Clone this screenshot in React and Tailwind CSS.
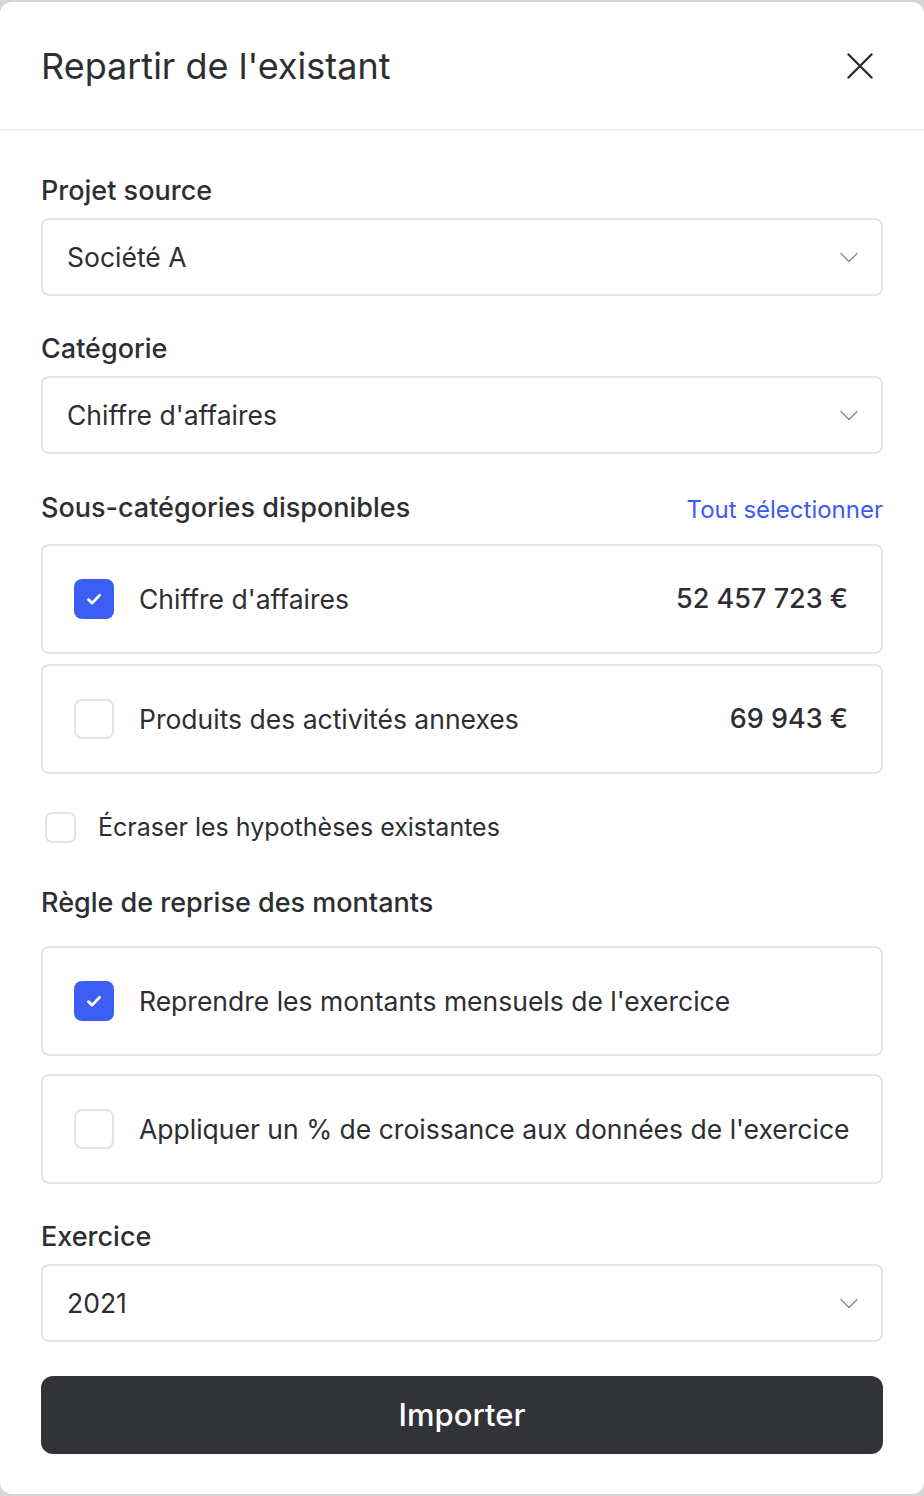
import React from 'react'

//===== small pieces =====//
const Chevron = () => (
  <svg width="20" height="20" viewBox="0 0 20 20" fill="none" className="shrink-0">
    <path d="M2 6.5l8 8 8-8" stroke="#8b8c90" strokeWidth="1.4" strokeLinecap="round" strokeLinejoin="round" />
  </svg>
)

const Select = ({ value }) => (
  <div className="flex h-[78px] items-center justify-between rounded-[8px] border-2 border-[#e4e4e7] bg-white pl-[24px] pr-[22px]">
    <span className="text-[26.5px] leading-[32px] text-[#2d2e32]">{value}</span>
    <Chevron />
  </div>
)

const Check = ({ checked, size = 'lg' }) => {
  const box = size === 'lg' ? 'h-[40px] w-[40px] rounded-[8px]' : 'h-[31px] w-[31px] rounded-[7px]'
  if (checked) {
    return (
      <div className={`${box} flex shrink-0 items-center justify-center bg-[#3d5ef5]`}>
        <svg width="20" height="20" viewBox="0 0 16 16" fill="none">
          <path d="M3.5 8.5l3 2.8L12.5 5" stroke="white" strokeWidth="2.2" strokeLinecap="round" strokeLinejoin="round" />
        </svg>
      </div>
    )
  }
  return <div className={`${box} shrink-0 border-2 border-[#e4e4e7] bg-white`} />
}

const OptionCard = ({ checked, label, amount }) => (
  <div className="flex h-[110px] shrink-0 items-center rounded-[8px] border-2 border-[#e4e4e7] bg-white pl-[31px] pr-[33px]">
    <Check checked={checked} />
    <span className="ml-[25px] flex-1 whitespace-nowrap text-[26.5px] leading-[32px] text-[#2d2e32]">{label}</span>
    {amount && <span className="whitespace-nowrap text-[27px] font-medium leading-[32px] text-[#2d2e32]">{amount}</span>}
  </div>
)

const Label = ({ children }) => (
  <div className="text-[27px] font-medium leading-[32px] text-[#2d2e32]">{children}</div>
)

export default function App() {
  return (
    <div className="min-h-screen bg-[#d6d6d8] py-[2px]" style={{ fontFamily: 'Inter, "Noto Sans", sans-serif' }}>
      <div className="rounded-[12px] bg-white">
        {/* header */}
        <div className="flex h-[129px] items-center justify-between border-b-2 border-[#f2f2f3] pl-[41px] pr-[51px]">
          <h1 className="text-[36px] font-normal text-[#2d2e32]">Repartir de l'existant</h1>
          <svg width="26" height="26" viewBox="0 0 26 26" fill="none">
            <path d="M1.5 1.5l23 23M24.5 1.5l-23 23" stroke="#2d2e32" strokeWidth="2.4" strokeLinecap="round" />
          </svg>
        </div>

        {/* body */}
        <div className="px-[41px] pt-[44px] pb-[40px]">
          <Label>Projet source</Label>
          <div className="mt-[11px]">
            <Select value="Société A" />
          </div>

          <div className="mt-[37px]">
            <Label>Catégorie</Label>
          </div>
          <div className="mt-[11px]">
            <Select value="Chiffre d'affaires" />
          </div>

          <div className="mt-[38px] flex h-[32px] items-end justify-between">
            <Label>Sous-catégories disponibles</Label>
            <span className="text-[24px] leading-[28px] text-[#3b5cf0]">Tout sélectionner</span>
          </div>
          <div className="mt-[20px] flex flex-col gap-[10px]">
            <OptionCard checked label="Chiffre d'affaires" amount="52 457 723 €" />
            <OptionCard label="Produits des activités annexes" amount="69 943 €" />
          </div>

          <div className="mt-[38px] flex h-[31px] items-center pl-[4px]">
            <Check size="sm" />
            <span className="ml-[22px] text-[25px] leading-[31px] text-[#2d2e32]">Écraser les hypothèses existantes</span>
          </div>

          <div className="mt-[44px]">
            <Label>Règle de reprise des montants</Label>
          </div>
          <div className="mt-[27px] flex flex-col gap-[18px]">
            <OptionCard checked label="Reprendre les montants mensuels de l'exercice" />
            <OptionCard label="Appliquer un % de croissance aux données de l'exercice" />
          </div>

          <div className="mt-[37px]">
            <Label>Exercice</Label>
          </div>
          <div className="mt-[11px]">
            <Select value="2021" />
          </div>

          <button className="mt-[34px] flex h-[78px] w-full items-center justify-center rounded-[12px] bg-[#323337] text-[31px] font-medium text-white">
            Importer
          </button>
        </div>
      </div>
    </div>
  )
}
